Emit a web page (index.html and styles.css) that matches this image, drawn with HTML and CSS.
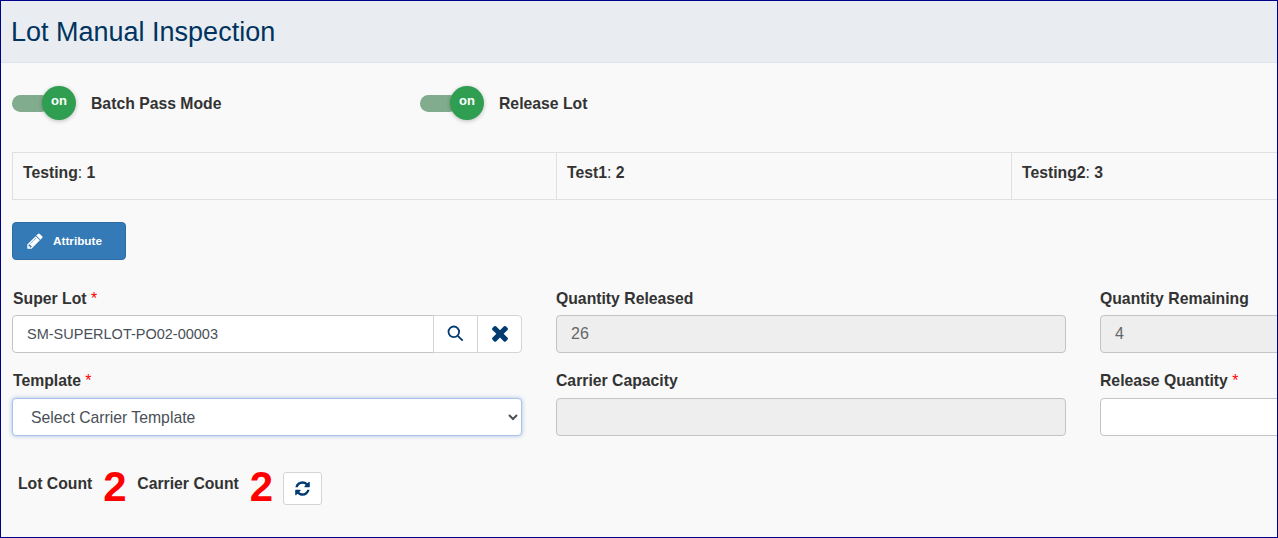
FILE: index.html
```html
<!DOCTYPE html>
<html lang="en">
<head>
    <meta charset="UTF-8">
    <title>Lot Manual Inspection</title>
    <link rel="stylesheet" href="styles.css">
</head>
<body>
    <div class="window">
        <div class="page-header">
            <h1>Lot Manual Inspection</h1>
        </div>

        <div class="content">
            <!-- Toggles -->
            <div class="toggle-row">
                <div class="toggle-item">
                    <span class="toggle"><span class="toggle-knob">on</span></span>
                    <span class="toggle-label">Batch Pass Mode</span>
                </div>
                <div class="toggle-item">
                    <span class="toggle"><span class="toggle-knob">on</span></span>
                    <span class="toggle-label">Release Lot</span>
                </div>
            </div>

            <!-- Counts by test -->
            <div class="test-row">
                <div class="test-cell test-cell-first"><b>Testing</b>: <b>1</b></div>
                <div class="test-cell test-cell-second"><b>Test1</b>: <b>2</b></div>
                <div class="test-cell test-cell-third"><b>Testing2</b>: <b>3</b></div>
            </div>

            <button class="btn-attribute" type="button">
                <svg class="icon-pencil" viewBox="0 0 1792 1792"><path d="M491 1536l91-91-235-235-91 91v107h128v128h107zm523-928q0-22-22-22-10 0-17 7l-542 542q-7 7-7 17 0 22 22 22 10 0 17-7l542-542q7-7 7-17zm-54-192l416 416-832 832h-416v-416zm683 96q0 53-37 90l-166 166-416-416 166-165q36-38 90-38 53 0 91 38l235 234q37 39 37 91z"/></svg>
                <span class="btn-text">Attribute</span>
            </button>

            <!-- Form -->
            <div class="form-grid">
                <div class="field">
                    <label class="label-first">Super Lot <span class="req">*</span></label>
                    <div class="input-group">
                        <input class="control group-input" type="text" value="SM-SUPERLOT-PO02-00003">
                        <button class="group-btn" type="button">
                            <svg class="icon-search" viewBox="0 0 18 18"><circle cx="7.2" cy="7.2" r="5.6"/><line x1="11.4" y1="11.4" x2="16.6" y2="16.6"/></svg>
                        </button>
                        <button class="group-btn group-btn-last" type="button">
                            <svg class="icon-times" viewBox="0 0 1792 1792"><path d="M1490 1322q0 40-28 68l-136 136q-28 28-68 28t-68-28l-294-294-294 294q-28 28-68 28t-68-28l-136-136q-28-28-28-68t28-68l294-294-294-294q-28-28-28-68t28-68l136-136q28-28 68-28t68 28l294 294 294-294q28-28 68-28t68 28l136 136q28 28 28 68t-28 68l-294 294 294 294q28 28 28 68z"/></svg>
                        </button>
                    </div>
                </div>
                <div class="field">
                    <label>Quantity Released</label>
                    <input class="control" type="text" value="26" disabled>
                </div>
                <div class="field">
                    <label>Quantity Remaining</label>
                    <input class="control" type="text" value="4" disabled>
                </div>
                <div class="field field-lower">
                    <label class="label-first">Template <span class="req">*</span></label>
                    <select class="control select-focus">
                        <option>Select Carrier Template</option>
                    </select>
                </div>
                <div class="field field-lower">
                    <label>Carrier Capacity</label>
                    <input class="control" type="text" disabled>
                </div>
                <div class="field field-lower">
                    <label>Release Quantity <span class="req">*</span></label>
                    <input class="control" type="text">
                </div>
            </div>

            <!-- Totals -->
            <div class="count-row">
                <span class="count-label">Lot Count</span>
                <span class="count-value">2</span>
                <span class="count-label">Carrier Count</span>
                <span class="count-value">2</span>
                <button class="btn-refresh" type="button">
                    <svg class="icon-refresh" viewBox="0 0 1792 1792"><path d="M1639 1056q0 5-1 7-64 268-268 434.5t-478 166.5q-146 0-282.5-55t-243.5-157l-129 129q-19 19-45 19t-45-19-19-45v-448q0-26 19-45t45-19h448q26 0 45 19t19 45-19 45l-137 137q71 66 161 102t187 36q134 0 250-65t186-179q11-17 53-117 8-23 30-23h192q13 0 22.5 9.5t9.5 22.5zm25-800v448q0 26-19 45t-45 19h-448q-26 0-45-19t-19-45 19-45l138-138q-148-137-349-137-134 0-250 65t-186 179q-11 17-53 117-8 23-30 23h-199q-13 0-22.5-9.5t-9.5-22.5v-7q65-268 270-434.5t480-166.5q146 0 284 55.5t245 156.5l130-129q19-19 45-19t45 19 19 45z"/></svg>
                </button>
            </div>
        </div>
    </div>
</body>
</html>
```

FILE: styles.css
```css
* {
    box-sizing: border-box;
}
html, body {
    margin: 0;
    padding: 0;
}
body {
    font-family: "Liberation Sans", Arial, sans-serif;
    color: #333;
}
.window {
    width: 1278px;
    height: 538px;
    border: 1px solid #00008b;
    background: #f9f9f9;
    overflow: hidden;
}
.page-header {
    height: 62px;
    padding: 15px 10px 0;
    background: #e9ecf1;
    border-bottom: 1px solid #dfe3ea;
}
h1 {
    margin: 0;
    font-size: 27px;
    line-height: 32px;
    font-weight: 400;
    color: #00345f;
}
.content {
    width: 1700px;
    padding: 22px 0 0 11px;
}
.toggle-row {
    display: flex;
    height: 36px;
}
.toggle-item {
    width: 408px;
    display: flex;
    align-items: center;
}
.toggle {
    position: relative;
    width: 38px;
    height: 17px;
    margin-right: 41px;
    border-radius: 9px;
    background: #82ac8e;
}
.toggle-knob {
    position: absolute;
    left: 30px;
    top: -9px;
    width: 34px;
    height: 34px;
    border-radius: 50%;
    background: #2f9e50;
    box-shadow: 0 1px 4px rgba(0, 0, 0, 0.25);
    color: #fff;
    font-size: 13px;
    font-weight: 700;
    line-height: 30px;
    text-align: center;
}
.toggle-label {
    padding-top: 2px;
    font-size: 15.75px;
    font-weight: 700;
}
.test-row {
    display: flex;
    height: 48px;
    margin-top: 31px;
    border-top: 1px solid #e0e0e0;
    border-bottom: 1px solid #e0e0e0;
    border-left: 1px solid #e0e0e0;
    font-size: 15.75px;
}
.test-cell {
    padding: 11px 10px 0;
    line-height: 18px;
}
.test-cell-first {
    width: 543px;
}
.test-cell-second {
    width: 455px;
    border-left: 1px solid #e0e0e0;
}
.test-cell-third {
    width: 600px;
    border-left: 1px solid #e0e0e0;
}
.btn-attribute {
    display: flex;
    align-items: center;
    width: 114px;
    height: 38px;
    margin-top: 22px;
    padding: 0 0 0 14px;
    border: 1px solid #2e6da4;
    border-radius: 4px;
    background: #337ab7;
    color: #fff;
    font-family: inherit;
    font-size: 11.75px;
    font-weight: 700;
}
.icon-pencil {
    width: 18px;
    height: 18px;
    margin: -1px 9px 0 -1px;
    fill: #fff;
}
.btn-text {
    margin-top: -2px;
}
.form-grid {
    display: grid;
    grid-template-columns: repeat(3, 510px);
    column-gap: 34px;
    row-gap: 18px;
    margin-top: 28px;
}
.field label {
    display: block;
    height: 27px;
    padding-top: 1px;
    font-size: 15.75px;
    font-weight: 700;
    line-height: 20px;
}
.field-lower label {
    padding-top: 0;
}
.field .label-first {
    padding-left: 1px;
}
.req {
    color: #f00;
    font-weight: 400;
}
.control {
    display: block;
    width: 100%;
    height: 38px;
    padding: 0 14px;
    border: 1px solid #c4c4c4;
    border-radius: 4px;
    background: #fff;
    color: #495057;
    font-family: inherit;
    font-size: 16px;
}
.control:disabled {
    background: #eee;
    color: #666;
}
.select-focus {
    padding-left: 14px;
    border-color: #a8c4e8;
    box-shadow: 0 0 4px rgba(90, 140, 210, 0.5);
    font-size: 15.75px;
}
.input-group {
    display: flex;
}
.group-input {
    flex: 1;
    border-radius: 4px 0 0 4px;
    font-size: 14.5px;
}
.group-btn {
    display: flex;
    align-items: center;
    justify-content: center;
    width: 45px;
    height: 38px;
    margin-left: -1px;
    padding: 0;
    border: 1px solid #d4d4d4;
    background: #fff;
}
.group-btn-last {
    border-radius: 0 4px 4px 0;
}
.icon-search {
    width: 17px;
    height: 17px;
    margin-top: -2px;
    fill: none;
    stroke: #003a70;
    stroke-width: 1.9;
}
.icon-times {
    width: 24px;
    height: 24px;
    margin-top: -2px;
    fill: #003a70;
}
.count-row {
    display: flex;
    align-items: center;
    height: 40px;
    margin-top: 28px;
    padding-left: 6px;
}
.count-label {
    font-size: 15.75px;
    font-weight: 700;
}
.count-value {
    width: 45px;
    margin-top: 6px;
    color: #f00;
    font-size: 42px;
    font-weight: 700;
    text-align: center;
}
.btn-refresh {
    display: flex;
    align-items: center;
    justify-content: center;
    width: 39px;
    height: 33px;
    margin: 9px 0 0 -1px;
    padding: 0;
    border: 1px solid #d4d4d4;
    border-radius: 3px;
    background: #fff;
}
.icon-refresh {
    width: 17px;
    height: 17px;
    fill: #003a70;
}
```
